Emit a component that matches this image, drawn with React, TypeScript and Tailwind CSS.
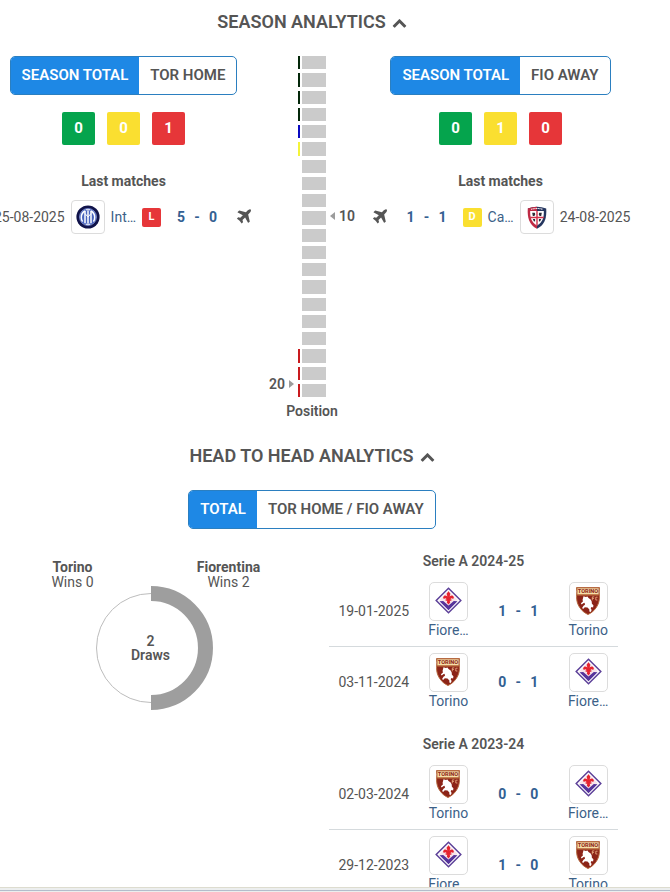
type Team = 'torino' | 'fiorentina' | 'inter' | 'cagliari';
type Result = 'W' | 'D' | 'L';

interface Match {
  date: string;
  home: Team;
  away: Team;
  score: [number, number];
}

const TEAM_LABELS: Record<Team, string> = {
  torino: 'Torino',
  fiorentina: 'Fiore…',
  inter: 'Int…',
  cagliari: 'Ca…',
};

const SEASONS: { name: string; matches: Match[] }[] = [
  {
    name: 'Serie A 2024-25',
    matches: [
      { date: '19-01-2025', home: 'fiorentina', away: 'torino', score: [1, 1] },
      { date: '03-11-2024', home: 'torino', away: 'fiorentina', score: [0, 1] },
    ],
  },
  {
    name: 'Serie A 2023-24',
    matches: [
      { date: '02-03-2024', home: 'torino', away: 'fiorentina', score: [0, 0] },
      { date: '29-12-2023', home: 'fiorentina', away: 'torino', score: [1, 0] },
    ],
  },
];

const POSITIONS = Array.from({ length: 20 }, (_, i) => i + 1);

const RESULT_COLORS: Record<Result, string> = {
  W: 'bg-[#05a44d]',
  D: 'bg-[#fadf30]',
  L: 'bg-[#e63639]',
};

function stripeColor(position: number) {
  if (position <= 4) return 'bg-[#04280a]';
  if (position === 5) return 'bg-[#0a0ac0]';
  if (position === 6) return 'bg-[#f4f43a]';
  if (position >= 18) return 'bg-[#c91a1e]';
  return 'bg-transparent';
}

function ChevronUpIcon() {
  return (
    <svg width="15" height="15" viewBox="0 0 1792 1792" fill="currentColor" aria-hidden="true">
      <path d="M1683 1331l-166 165q-19 19-45 19t-45-19l-531-531-531 531q-19 19-45 19t-45-19l-166-165q-19-19-19-45.500t19-45.500l742-741q19-19 45-19t45 19l742 741q19 19 19 45.500t-19 45.500z" />
    </svg>
  );
}

function PlaneIcon() {
  return (
    <svg width="18" height="18" viewBox="0 0 1792 1792" fill="currentColor" aria-hidden="true">
      <path d="M1568 160q44 52 12 148t-108 172l-161 161 160 696q5 19-12 33l-128 96q-7 6-19 6-4 0-7-1-15-3-21-16l-279-508-259 259 53 194q5 17-8 31l-96 96q-9 9-23 9h-2q-15-2-24-13l-189-252-252-189q-11-7-13-23-1-13 9-25l96-97q9-9 23-9 6 0 8 1l194 53 259-259-508-279q-14-8-17-24-2-16 9-27l128-128q14-13 30-8l665 159 160-160q76-76 172-108t148 12z" />
    </svg>
  );
}

function TorinoCrest() {
  return (
    <svg width="24" height="28" viewBox="0 0 24 28" aria-hidden="true">
      <path
        d="M.5.600h23c-.5 3-.3 6-.1 8.600.4 8.800-4.900 15.300-11.400 18.300C5.500 24.500.2 18 .6 9.200.8 6 1 3.600.5.600z"
        fill="#8c2418"
        stroke="#b5673c"
      />
      <path d="M1.200 1.200h21.600c-.3 2-.3 4-.1 6.300H1.300c.2-2.300.2-4.300-.1-6.300z" fill="#f6dfa8" />
      <text
        x="12"
        y="6.400"
        textAnchor="middle"
        fontSize="5.600"
        fontWeight="800"
        fontFamily="Roboto, sans-serif"
        fill="#8f2a1c"
      >
        TORINO
      </text>
      <path d="M1.300 8h21.400" stroke="#c47a42" />
      <path
        d="M7.500 9.200l2.300.9 1.700-.6 1 1.600 2.200 1.400 1 2 .2 2.200 1.500 1.500-.3 2.400-1.600-.6-.8 1.200.9 1.700-.8 2.100-1.500-.5.100-2-1.900-2-2.700-.3-1.700 1.700-1-1 1.400-2.200 1.500-.9-.4-2-1.400.5-1.500 1.300-.8-1.300 2-1.900-.3-1.700z"
        fill="#fff"
      />
      <path
        d="M18.300 9.900h-2v3.400M16.300 11.500h1.600M21.600 10.200h-1.800v2.800h1.600"
        stroke="#f0b78a"
        strokeWidth=".8"
        fill="none"
      />
    </svg>
  );
}

function FiorentinaCrest() {
  return (
    <svg width="27" height="27" viewBox="0 0 27 27" aria-hidden="true">
      <path d="M13.500 1.200l12.300 12.300-12.300 12.300L1.200 13.500z" fill="#fff" stroke="#5d4199" strokeWidth="1.500" />
      <path d="M13.500 3.800l9.700 9.700-2.700.2-7 6.500-7-6.500-2.700-.2z" fill="#f8e3ea" />
      <path d="M4.500 14.200l3.700-.2 5.300 4.600 5.300-4.600 3.700.2-9 9.100z" fill="#56349b" />
      <path
        d="M13.500 4.300l1.900 2.500-.8 2.700c1.100-.9 2.400-1.300 3.400-.6 1.200.9 1.100 2.500-.2 3-.2-.8-.9-1-1.600-.5l-1.200.9h1.400v1.400h-1.700l.5 1.900-1.700 1.900-1.700-1.900.5-1.900h-1.700v-1.400H12l-1.200-.9c-.7-.5-1.400-.3-1.600.5-1.300-.5-1.400-2.100-.2-3 1-.7 2.300-.3 3.400.6l-.8-2.700z"
        fill="#e5232f"
      />
    </svg>
  );
}

function InterCrest() {
  return (
    <svg width="24" height="24" viewBox="0 0 24 24" aria-hidden="true">
      <circle cx="12" cy="12" r="11.600" fill="#10134a" />
      <circle cx="12" cy="12" r="8.500" fill="#4763bd" stroke="#93a4e2" strokeWidth=".7" />
      <g fill="none" stroke="#fff" strokeWidth="1.500">
        <path d="M12 5.500v13M9 5.800v12.400M15 5.800v12.400" />
        <path d="M9 6C6.200 7.600 5.200 9.500 5.300 12.500c0 1.700.5 3 1.300 4.200M15 6c2.800 1.600 3.800 3.500 3.700 6.500 0 1.700-.5 3-1.300 4.200" />
        <path d="M9 8.500l3 3.500 3-3.500" strokeWidth="1" />
        <path d="M9.800 4.800h4.400M9.800 19.200h4.400" strokeWidth="1.100" />
      </g>
    </svg>
  );
}

function CagliariCrest() {
  return (
    <svg width="20" height="23" viewBox="0 0 20 23" aria-hidden="true">
      <path d="M.8 2.500Q10-.9 19.200 2.500c.6 8.700-1.200 16.500-9.200 20.200z" fill="#25365f" />
      <path d="M.8 2.500Q5.400.8 10 .8v21.900C2 19 .2 11.200.8 2.500z" fill="#bf2a44" />
      <path d="M3.200 5h13.600c.2 6.500-1 11-6.800 14.500C4.200 16 3 11.500 3.200 5z" fill="#fff" />
      <path d="M10 5v14.500M3.200 11.500h13.600" stroke="#d0304a" strokeWidth="1.400" />
      <path d="M4 3.300q6-1.700 12 0" stroke="#f3edf2" strokeWidth="1.100" strokeDasharray="1.200 .5" fill="none" />
      <path
        d="M5.200 6.800h2.600l.5 1.500-.9 1.800H5.800zM12.200 6.800h2.600l-.6 3.300h-1.600l-.9-1.800zM5.800 13h2.300v2.500l-1.300-.3zM11.900 13h2.300l-1 2.200-1.300.3z"
        fill="#2b2b38"
      />
    </svg>
  );
}

function Crest({ team }: { team: Team }) {
  switch (team) {
    case 'torino':
      return <TorinoCrest />;
    case 'fiorentina':
      return <FiorentinaCrest />;
    case 'inter':
      return <InterCrest />;
    default:
      return <CagliariCrest />;
  }
}

function SectionTitle({ children }: { children: string }) {
  return (
    <h2 className="text-lg leading-6 font-semibold">
      <button type="button" className="mx-auto flex items-center gap-1.5">
        {children}
        <ChevronUpIcon />
      </button>
    </h2>
  );
}

function Toggle({ options }: { options: [string, string] }) {
  return (
    <div className="flex h-[39px] w-fit shrink-0 overflow-hidden rounded-[5px] border border-[#2b7fc0] text-[15px] font-semibold whitespace-nowrap">
      <button type="button" aria-pressed="true" className="bg-[#1e88e5] px-[11px] text-white">
        {options[0]}
      </button>
      <button type="button" aria-pressed="false" className="px-[11px]">
        {options[1]}
      </button>
    </div>
  );
}

function ResultTotals({ totals }: { totals: [number, number, number] }) {
  const results: Result[] = ['W', 'D', 'L'];
  return (
    <div className="flex gap-3 text-[15px] font-bold text-white">
      {results.map((result, i) => (
        <span key={result} className={`grid size-[33px] place-items-center rounded-xs ${RESULT_COLORS[result]}`}>
          {totals[i]}
        </span>
      ))}
    </div>
  );
}

function Score({ score }: { score: [number, number] }) {
  return (
    <a href="#match" className="flex w-10 justify-between font-bold text-[#336092]">
      <span>{score[0]}</span>
      <span>-</span>
      <span>{score[1]}</span>
    </a>
  );
}

interface TeamSeasonProps {
  options: [string, string];
  totals: [number, number, number];
  date: string;
  opponent: Team;
  result: Result;
  score: [number, number];
  mirrored?: boolean;
}

function TeamSeason({ options, totals, date, opponent, result, score, mirrored }: TeamSeasonProps) {
  return (
    <div className="flex flex-col items-center">
      <Toggle options={options} />
      <div className="mt-[17px]">
        <ResultTotals totals={totals} />
      </div>
      <h3 className="mt-[26px] leading-5 font-bold">Last matches</h3>
      <div
        className={`mt-[9px] flex shrink-0 items-center whitespace-nowrap ${mirrored ? 'flex-row-reverse' : ''}`}
      >
        <span>{date}</span>
        <span className="mx-1.5 grid size-[34px] shrink-0 place-items-center rounded-sm border border-[#dcdcdc]">
          <Crest team={opponent} />
        </span>
        <a href="#team" className="text-[#3c6188]">
          {TEAM_LABELS[opponent]}
        </a>
        <span
          className={`mx-1.5 grid size-[19px] place-items-center rounded-xs text-[11px] font-bold text-white ${RESULT_COLORS[result]}`}
        >
          {result}
        </span>
        <span className="mx-2.5">
          <Score score={score} />
        </span>
        <span className={mirrored ? 'mr-2' : 'ml-2'}>
          <PlaneIcon />
        </span>
      </div>
    </div>
  );
}

function PositionLadder({ home, away }: { home: number; away: number }) {
  return (
    <div className="flex flex-col items-center">
      <div className="flex h-[341px] gap-1 font-semibold">
        <div className="flex h-[336px] w-[26px] flex-col">
          {POSITIONS.map((position) => (
            <div key={position} className="flex min-h-0 flex-1 items-center justify-end gap-1">
              {position === home && (
                <>
                  {position}
                  <span className="border-y-4 border-l-[5px] border-y-transparent border-l-[#9c9c9c]" />
                </>
              )}
            </div>
          ))}
        </div>
        <div className="flex flex-col gap-1">
          {POSITIONS.map((position) => (
            <div key={position} className="flex flex-1 gap-0.5">
              <div className={`w-0.5 ${stripeColor(position)}`} />
              <div className="w-6 bg-[#cbcbcb]" />
            </div>
          ))}
        </div>
        <div className="flex h-[336px] w-[26px] flex-col">
          {POSITIONS.map((position) => (
            <div key={position} className="flex min-h-0 flex-1 items-center gap-1">
              {position === away && (
                <>
                  <span className="border-y-4 border-r-[5px] border-y-transparent border-r-[#9c9c9c]" />
                  {position}
                </>
              )}
            </div>
          ))}
        </div>
      </div>
      <h3 className="mt-1 leading-5 font-semibold">Position</h3>
    </div>
  );
}

function WinsDonut() {
  return (
    <div>
      <div className="flex justify-center gap-[76px] text-center leading-[15px]">
        <p className="w-20">
          <strong className="font-bold">Torino</strong>
          <br />
          Wins 0
        </p>
        <p className="w-20">
          <strong className="font-bold">Fiorentina</strong>
          <br />
          Wins 2
        </p>
      </div>
      <div className="-mt-1 grid place-items-center">
        <svg width="124" height="124" viewBox="0 0 124 124" className="col-start-1 row-start-1" aria-hidden="true">
          <circle cx="62" cy="62" r="54.500" fill="none" stroke="#bdbdbd" />
          <path d="M62 7.500a54.500 54.500 0 0 1 0 109" fill="none" stroke="#9e9e9e" strokeWidth="15" />
        </svg>
        <p className="col-start-1 row-start-1 text-center leading-[14px] font-semibold">
          2<br />
          Draws
        </p>
      </div>
    </div>
  );
}

function MatchTeam({ team }: { team: Team }) {
  return (
    <a href="#team" className="flex flex-col items-center leading-[18px] text-[#3c6188]">
      <span className="flex size-[39px] justify-center rounded-[5px] border border-[#dcdcdc] pt-1">
        <Crest team={team} />
      </span>
      {TEAM_LABELS[team]}
    </a>
  );
}

function SeasonMatches({ name, matches }: { name: string; matches: Match[] }) {
  return (
    <section>
      <h3 className="mb-[5px] text-center leading-5 font-semibold">{name}</h3>
      <ul>
        {matches.map((match) => (
          <li
            key={match.date}
            className="grid grid-cols-[3fr_2fr_80px_2fr] place-items-center border-b border-[#d5dadd] pt-1.5 pb-[7px] last:border-transparent"
          >
            <span>{match.date}</span>
            <MatchTeam team={match.home} />
            <Score score={match.score} />
            <MatchTeam team={match.away} />
          </li>
        ))}
      </ul>
    </section>
  );
}

export default function App() {
  return (
    <div className="flex h-screen flex-col overflow-hidden bg-white font-[Roboto,sans-serif] text-sm text-[#555]">
      <main className="min-h-0 flex-1 overflow-hidden pt-2.5 pr-[52px] pl-1.5">
        <SectionTitle>SEASON ANALYTICS</SectionTitle>
        <div className="mt-[22px] grid grid-cols-[minmax(0,1fr)_142px_minmax(0,1fr)]">
          <TeamSeason
            options={['SEASON TOTAL', 'TOR HOME']}
            totals={[0, 0, 1]}
            date="25-08-2025"
            opponent="inter"
            result="L"
            score={[5, 0]}
          />
          <PositionLadder home={20} away={10} />
          <TeamSeason
            options={['SEASON TOTAL', 'FIO AWAY']}
            totals={[0, 1, 0]}
            date="24-08-2025"
            opponent="cagliari"
            result="D"
            score={[1, 1]}
            mirrored
          />
        </div>

        <div className="mt-[23px]">
          <SectionTitle>HEAD TO HEAD ANALYTICS</SectionTitle>
        </div>
        <div className="mt-[22px] flex justify-center">
          <Toggle options={['TOTAL', 'TOR HOME / FIO AWAY']} />
        </div>
        <div className="mt-[22px] grid grid-cols-2 gap-[34px]">
          <div className="pt-[9px]">
            <WinsDonut />
          </div>
          <div className="flex flex-col gap-4">
            {SEASONS.map((season) => (
              <SeasonMatches key={season.name} {...season} />
            ))}
          </div>
        </div>
      </main>
      <footer className="h-[5px] shrink-0 border-t border-[#dddccf] bg-[#eceeee]">
        <div className="mt-[2px] h-px bg-[#b4bccb]" />
      </footer>
    </div>
  );
}
